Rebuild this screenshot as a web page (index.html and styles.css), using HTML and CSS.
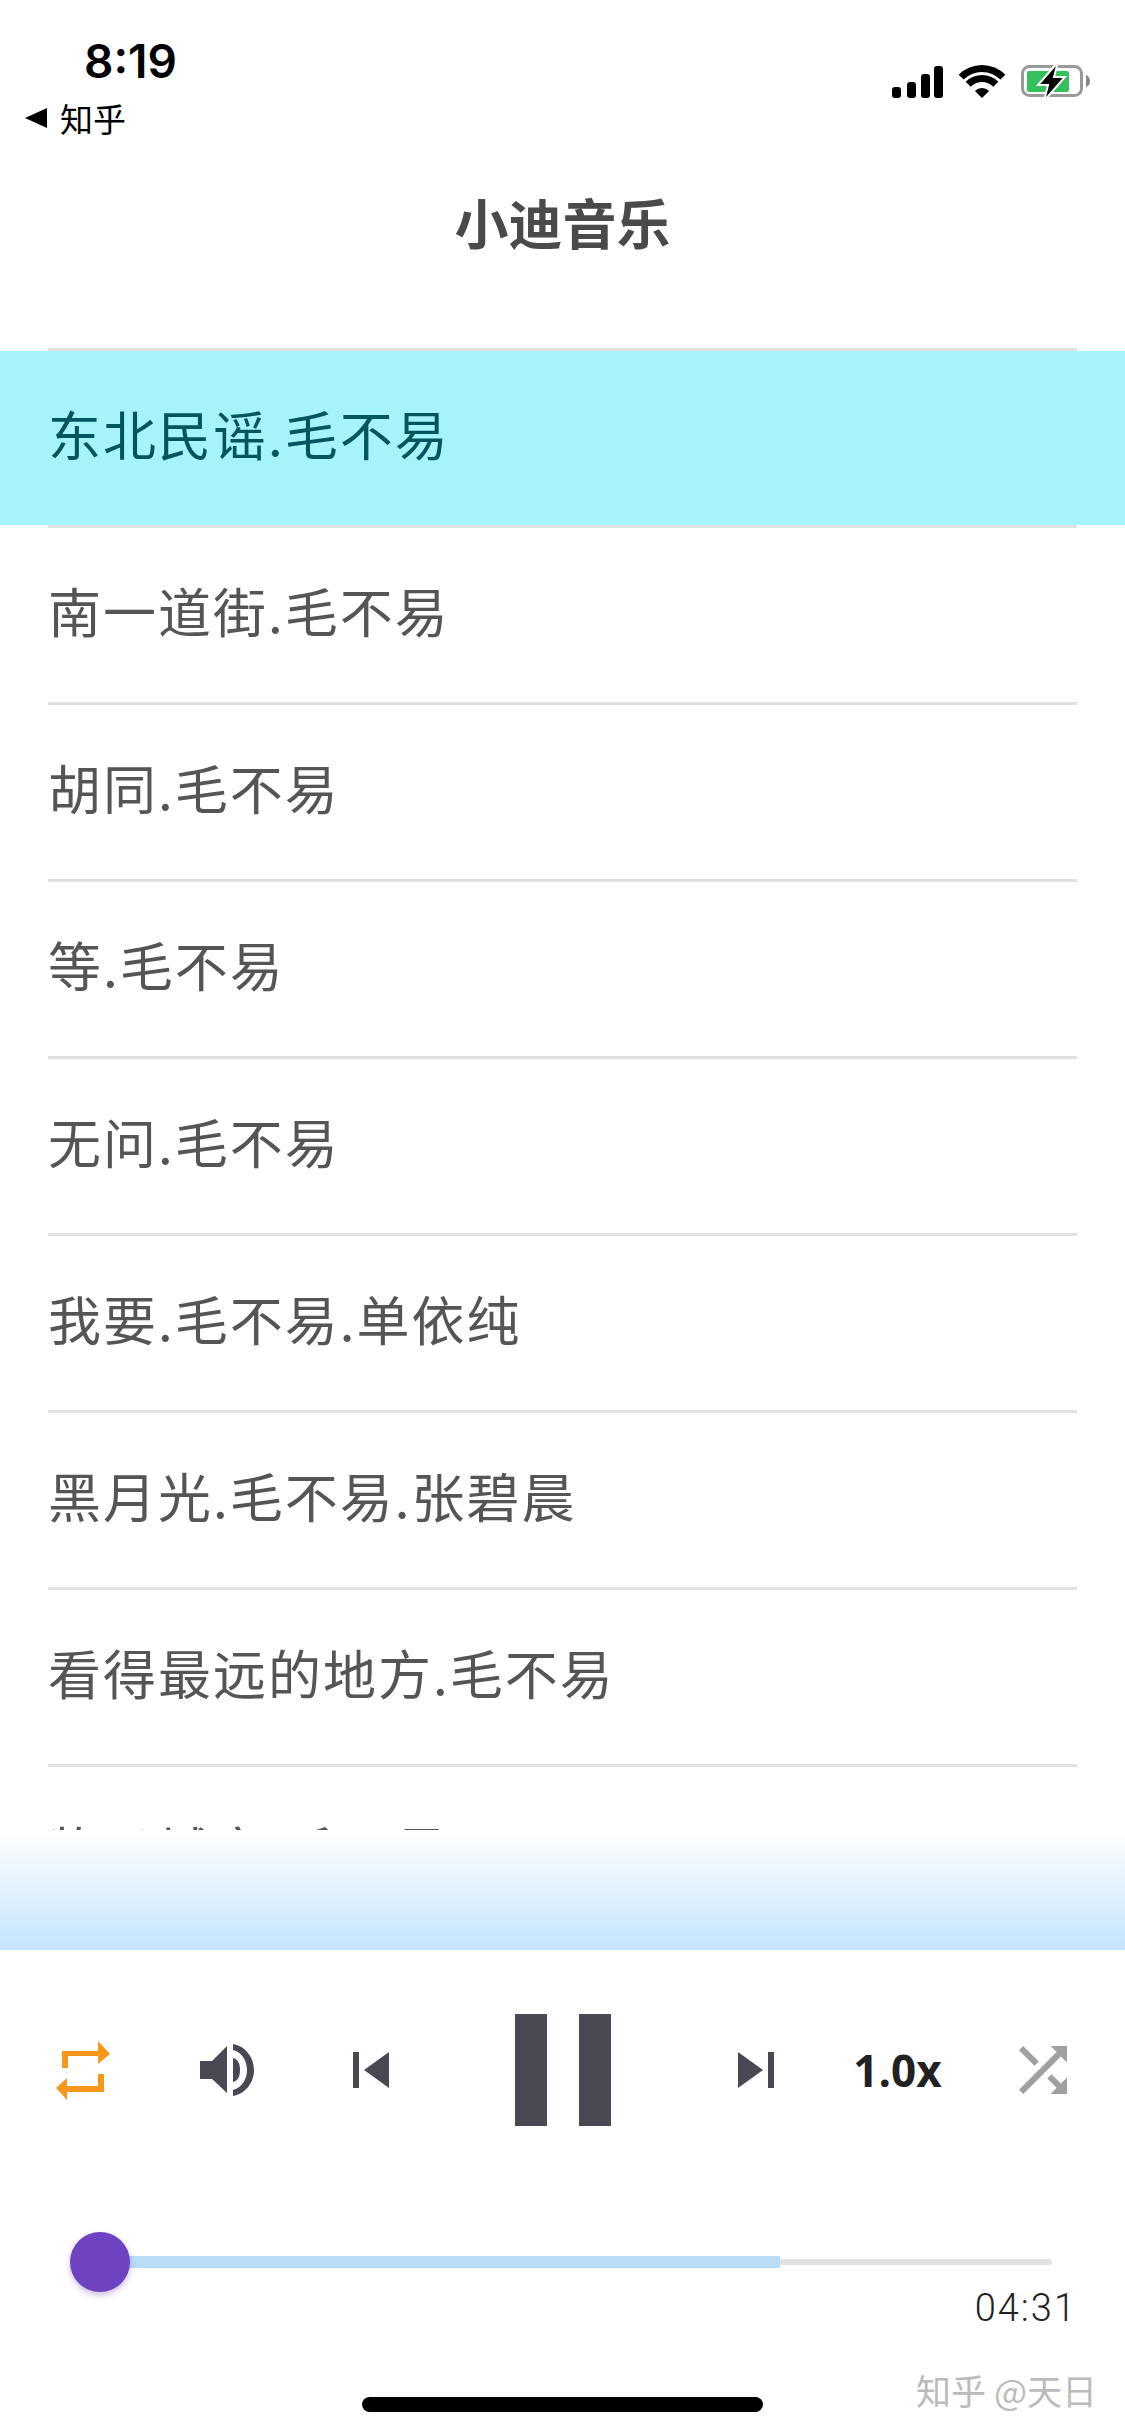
FILE: index.html
```html
<!DOCTYPE html>
<html lang="zh-CN">
<head>
  <meta charset="UTF-8">
  <meta name="viewport" content="width=device-width, initial-scale=1.0">
  <title>小迪音乐</title>
  <link rel="stylesheet" href="styles.css">
</head>
<body>
  <div class="page">
    <header class="status-bar">
      <div class="status-left">
        <div class="clock">8:19</div>
        <div class="back-link">
          <svg class="back-arrow" viewBox="0 0 22 20"><path d="M0 10L22 0V20Z"/></svg>
          <span>知乎</span>
        </div>
      </div>
      <div class="status-icons">
        <svg class="icon-signal" viewBox="0 0 52 32">
          <rect x="0" y="21" width="9" height="11" rx="3"/>
          <rect x="15" y="16" width="9" height="16" rx="3"/>
          <rect x="29" y="8" width="9" height="24" rx="3"/>
          <rect x="42" y="0" width="9" height="32" rx="3"/>
        </svg>
        <svg class="icon-wifi" viewBox="0 0 46 33">
          <path d="M-.3 9.700A33 33 0 0 1 46.300 9.700L41.400 14.600A26 26 0 0 0 4.600 14.600Z"/>
          <path d="M6.700 16.700A23 23 0 0 1 39.300 16.700L34.300 21.700A16 16 0 0 0 11.700 21.700Z"/>
          <path d="M23 33L15.900 25.900A10 10 0 0 1 30.100 25.900Z"/>
        </svg>
        <svg class="icon-battery" viewBox="0 0 70 40">
          <rect x="1.500" y="4.500" width="59" height="29" rx="7" fill="none" stroke="#999" stroke-width="3"/>
          <path d="M65 13C68 14 69 17 69 19C69 22 68 24 65 25Z" fill="#888"/>
          <rect x="6" y="9" width="42" height="21" rx="2" fill="#35c05c"/>
          <path d="M37 0L17 23H27L23 39L44 15H33Z" fill="#000" stroke="#fff" stroke-width="2"/>
        </svg>
      </div>
    </header>

    <h1 class="app-title">小迪音乐</h1>

    <main class="song-list">
      <div class="rule"></div>
      <div class="song song-active">东北民谣.毛不易</div>
      <div class="rule"></div>
      <div class="song">南一道街.毛不易</div>
      <div class="rule"></div>
      <div class="song">胡同.毛不易</div>
      <div class="rule"></div>
      <div class="song">等.毛不易</div>
      <div class="rule"></div>
      <div class="song">无问.毛不易</div>
      <div class="rule"></div>
      <div class="song">我要.毛不易.单依纯</div>
      <div class="rule"></div>
      <div class="song">黑月光.毛不易.张碧晨</div>
      <div class="rule"></div>
      <div class="song">看得最远的地方.毛不易</div>
      <div class="rule"></div>
      <div class="song">牧马城市.毛不易</div>
      <div class="list-fade"></div>
    </main>

    <footer class="player">
      <div class="controls">
        <svg class="icon-repeat" viewBox="0 0 54 59">
          <path d="M6 10H42V0L54 13L42 23V15H12V27H6Z"/>
          <path d="M48 33V51H11V59L0 47L11 37V45H42V33Z"/>
        </svg>
        <svg class="icon-volume" viewBox="0 0 54 52">
          <path d="M0 17H12L27 2V49L12 35H0Z"/>
          <path d="M33 14C38 15 40 20 40 26C40 32 38 37 33 38Z"/>
          <path d="M33 0C45 2 54 13 54 26C54 39 45 50 33 52V46C41 44 47 36 47 26C47 16 41 8 33 6Z"/>
        </svg>
        <svg class="icon-skip" viewBox="0 0 37 36">
          <path d="M0 0H6V36H0ZM11 18L36 0V36Z"/>
        </svg>
        <div class="pause">
          <span class="pause-bar"></span>
          <span class="pause-bar"></span>
        </div>
        <svg class="icon-skip" viewBox="0 0 37 36">
          <path d="M37 0H31V36H37ZM26 18L1 0V36Z"/>
        </svg>
        <div class="speed">1.0x</div>
        <svg class="icon-shuffle" viewBox="4 4 16 16">
          <path d="M10.590 9.170L5.410 4 4 5.410l5.170 5.170 1.420-1.410zM14.500 4l2.040 2.040L4 18.590 5.410 20 17.960 7.460 20 9.500V4h-5.500zm.330 9.410l-1.410 1.410 3.130 3.130L14.500 20H20v-5.500l-2.040 2.040-3.130-3.130z"/>
        </svg>
      </div>

      <div class="progress">
        <div class="progress-track">
          <div class="progress-buffer" style="width: 71.4%"></div>
          <div class="progress-rest"></div>
          <div class="progress-thumb"></div>
        </div>
      </div>
      <div class="duration">04:31</div>
      <div class="home-bar"></div>
      <div class="watermark">知乎 @天日</div>
    </footer>
  </div>
</body>
</html>
```

FILE: styles.css
```css
html, body {
  margin: 0;
  padding: 0;
  background: #fff;
}

.page {
  display: flex;
  flex-direction: column;
  width: 1125px;
  height: 2436px;
  overflow: hidden;
  font-family: "Noto Sans CJK SC", "Noto Sans", sans-serif;
  color: #555;
}

/* Status bar */
.status-bar {
  display: flex;
  justify-content: space-between;
  height: 170px;
  padding: 0 34px 0 25px;
  box-sizing: border-box;
}

.status-left {
  display: flex;
  flex-direction: column;
}

.clock {
  margin: 34px 0 0 59px;
  font-family: Inter, "Liberation Sans", sans-serif;
  font-size: 46px;
  font-weight: 600;
  line-height: 54px;
  color: #000;
}

.back-link {
  display: flex;
  align-items: center;
  gap: 13px;
  margin-top: 7px;
  font-size: 33px;
  line-height: 46px;
  color: #000;
}

.back-arrow {
  width: 22px;
  height: 22px;
}

.status-icons {
  display: flex;
  align-items: flex-start;
  padding-top: 62px;
}

.icon-signal {
  width: 52px;
  height: 32px;
  margin-top: 4px;
}

.icon-wifi {
  width: 46px;
  height: 33px;
  margin: 3px 16px 0 15px;
  overflow: visible;
}

.icon-battery {
  width: 70px;
  height: 40px;
}

/* Title */
.app-title {
  height: 178px;
  margin: 0;
  padding-top: 13px;
  box-sizing: border-box;
  text-align: center;
  font-size: 54px;
  font-weight: 700;
  line-height: 78px;
  color: #4a4a4a;
}

/* Song list */
.song-list {
  position: relative;
  flex: 1;
  overflow: hidden;
}

.rule {
  height: 3px;
  margin: 0 48px;
  background: #e0e0e0;
}

.song {
  display: flex;
  align-items: center;
  height: 174px;
  padding: 0 48px 10px;
  box-sizing: border-box;
  font-size: 53px;
  letter-spacing: 2px;
  color: #555;
}

.song-active {
  background: #a6f4f9;
  color: #00565e;
}

.list-fade {
  position: absolute;
  left: 0;
  right: 0;
  bottom: 0;
  height: 120px;
  background: linear-gradient(#fff, #c4e4fd);
}

/* Player */
.player {
  position: relative;
  height: 486px;
  padding-top: 20px;
  box-sizing: border-box;
  background: #fff;
}

.controls {
  display: grid;
  grid-template-columns: repeat(3, 144px) 240px repeat(3, 144px);
  justify-items: center;
  align-items: center;
  height: 200px;
  padding-left: 11px;
}

.icon-repeat {
  width: 54px;
  height: 59px;
  fill: #f7981d;
}

.icon-volume {
  width: 54px;
  height: 52px;
  fill: #4a4853;
}

.icon-skip {
  width: 37px;
  height: 36px;
  fill: #4a4853;
}

.icon-shuffle {
  width: 48px;
  height: 48px;
  fill: #a0a0a0;
}

.pause {
  display: flex;
  gap: 32px;
}

.pause-bar {
  width: 32px;
  height: 112px;
  background: #4a4853;
}

.speed {
  margin-right: 3px;
  font-family: "Open Sans", "Noto Sans", sans-serif;
  font-size: 44px;
  font-weight: 700;
  color: #222;
}

.progress {
  padding: 86px 73px 0 100px;
}

.progress-track {
  position: relative;
  display: flex;
  align-items: center;
  height: 12px;
}

.progress-buffer {
  height: 12px;
  background: #b9dcf8;
}

.progress-rest {
  flex: 1;
  height: 6px;
  border-radius: 0 3px 3px 0;
  background: #e2e2e2;
}

.progress-thumb {
  position: absolute;
  left: -30px;
  top: -24px;
  width: 60px;
  height: 60px;
  border-radius: 50%;
  background: #6f42c1;
  box-shadow: 0 3px 6px rgba(80, 40, 160, 0.3);
}

.duration {
  margin-top: 19px;
  padding-right: 48px;
  text-align: right;
  font-family: Roboto, sans-serif;
  font-size: 38px;
  font-weight: 300;
  line-height: 42px;
  letter-spacing: 2px;
  color: #222;
}

.home-bar {
  position: absolute;
  left: 362px;
  top: 447px;
  width: 401px;
  height: 15px;
  border-radius: 8px;
  background: #000;
}

.watermark {
  position: absolute;
  right: 28px;
  top: 417px;
  font-size: 35px;
  line-height: 46px;
  color: #bbb;
}
```
